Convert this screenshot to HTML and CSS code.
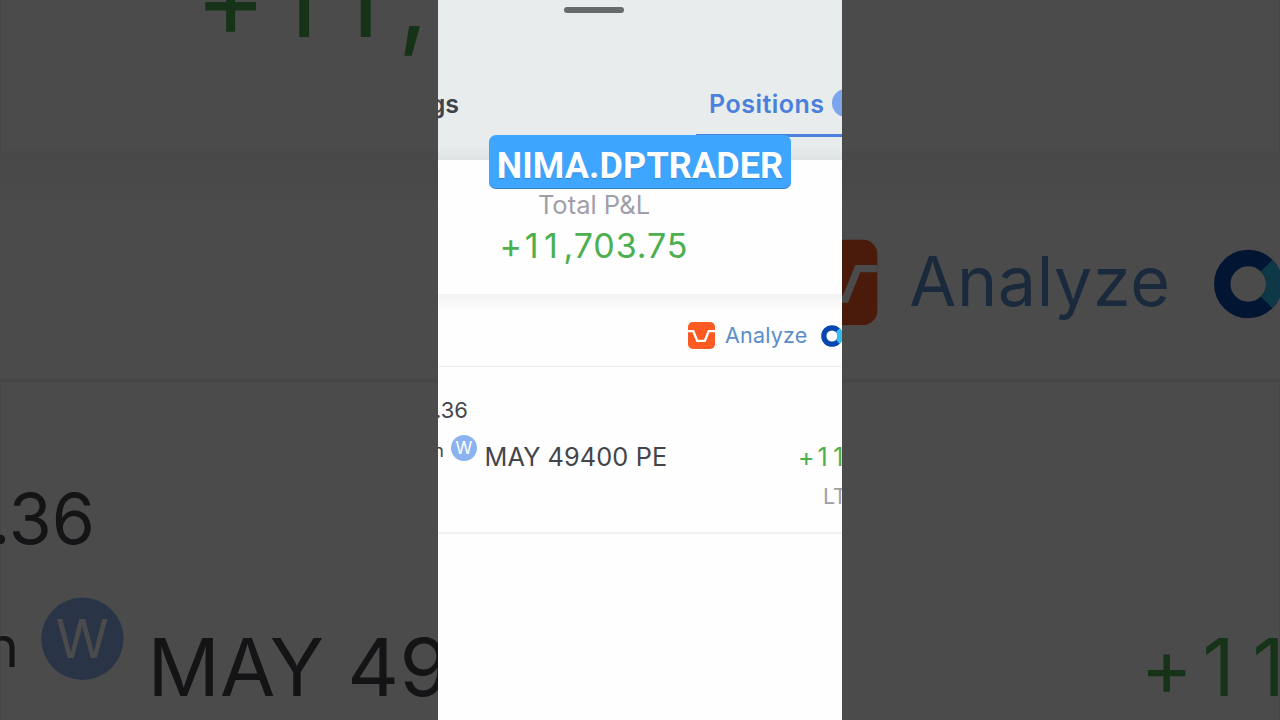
FILE: index.html
```
<!DOCTYPE html>
<html lang="en">
<head>
    <meta charset="UTF-8">
    <title>Positions</title>
    <link rel="stylesheet" href="styles.css">
</head>
<body>

<div class="backdrop" id="backdrop"></div>

<main class="screen" id="screen">
    <header class="header">
        <div class="handle"></div>
        <nav class="tabs">
            <div class="tab holdings">Holdings</div>
            <div class="tab positions">Positions <span class="count">1</span></div>
        </nav>
    </header>

    <section class="summary">
        <div class="summary-label">Total P&amp;L</div>
        <div class="summary-value"><span class="plus">+</span><span class="wide">11</span>,703.75</div>
    </section>

    <section class="tools">
        <svg class="analyze-icon" viewBox="0 0 28 28">
            <rect width="28" height="28" rx="5" fill="#fb5a22"/>
            <path d="M0 9.5H5.5L9.5 19.5H17.5L21.5 9.5H28" fill="none" stroke="#fff" stroke-width="2.4"/>
        </svg>
        <span class="analyze">Analyze</span>
        <svg class="ring-icon" viewBox="0 0 22 22">
            <circle cx="11" cy="11" r="8.2" fill="none" stroke="#0747ad" stroke-width="5.2"/>
            <path d="M16.8 5.2A8.2 8.2 0 0 1 16.8 16.8" fill="none" stroke="#35bdf0" stroke-width="5.2"/>
        </svg>
    </section>

    <section class="position">
        <div class="avg">0.36</div>
        <div class="name-row">
            <span class="suffix">th</span>
            <span class="weekly">W</span>
            <span class="name">MAY 49400 PE</span>
            <span class="pnl"><span class="plus">+</span><span class="wide">11</span>,703.75</span>
        </div>
        <div class="ltp">LTP</div>
    </section>
</main>

<div class="watermark">NIMA.DPTRADER</div>

<script>
    // the backdrop is an enlarged, dimmed copy of the screen
    const copy = document.getElementById('screen').cloneNode(true);
    copy.removeAttribute('id');
    document.getElementById('backdrop').appendChild(copy);
</script>

</body>
</html>
```
FILE: styles.css
```
body {
    margin: 0;
    width: 1280px;
    height: 720px;
    overflow: hidden;
    position: relative;
    display: flex;
    justify-content: center;
    background: #000;
    font-family: Inter, "Liberation Sans", sans-serif;
}

.backdrop {
    position: absolute;
    inset: 0;
    display: flex;
    justify-content: center;
    overflow: hidden;
    opacity: 0.295;
}

.backdrop .screen {
    transform: scale(3.168);
}

.screen {
    position: relative;
    width: 404px;
    height: 720px;
    flex-shrink: 0;
    overflow: hidden;
    background: #fefefe;
    white-space: nowrap;
}

.header {
    height: 160px;
    box-sizing: border-box;
    padding-top: 7px;
    background: linear-gradient(#e8ecec 0, #e8ecec 145px, #dfe2e3 160px);
}

.handle {
    width: 60px;
    height: 6px;
    margin-left: 126px;
    border-radius: 3px;
    background: #676b6b;
}

.tabs {
    display: flex;
    margin-top: 62px;
    height: 62px;
}

.tab {
    box-sizing: border-box;
    line-height: 58px;
    font-size: 25px;
    font-weight: 600;
}

.holdings {
    display: flex;
    justify-content: flex-end;
    width: 21px;
    margin-right: 237px;
    color: #41444b;
}

.positions {
    display: flex;
    align-items: flex-start;
    flex: 1;
    padding-left: 13px;
    border-bottom: 3px solid #4a7fdc;
    color: #4a80dc;
    letter-spacing: 0.5px;
}

.count {
    flex-shrink: 0;
    width: 28px;
    height: 28px;
    margin: 14px 0 0 7px;
    border-radius: 50%;
    background: #7da5ec;
    color: #fff;
    font-size: 16px;
    line-height: 28px;
    text-align: center;
}

.summary {
    height: 134px;
    box-sizing: border-box;
    padding-top: 28px;
    width: 312px;
    text-align: center;
}

.summary-label {
    font-size: 25.5px;
    line-height: 34px;
    color: #a09fa9;
}

.summary-value {
    margin-top: 4px;
    font-size: 34px;
    line-height: 40px;
    letter-spacing: 0.9px;
    color: #4caf50;
}

.summary-value .plus {
    letter-spacing: 2.6px;
}

.summary-value .wide {
    letter-spacing: 5.6px;
}

.tools {
    display: flex;
    align-items: center;
    height: 73px;
    box-sizing: border-box;
    padding: 11px 0 0 250px;
    border-bottom: 1px solid #efefef;
    background: linear-gradient(#f3f3f3 0, #fefefe 18px);
}

.analyze-icon {
    flex-shrink: 0;
    width: 27px;
    height: 27px;
}

.analyze {
    margin: -1px 0 0 10px;
    font-size: 21.5px;
    letter-spacing: 0.2px;
    color: #5a8dca;
}

.ring-icon {
    flex-shrink: 0;
    width: 22px;
    height: 22px;
    margin: 1px 0 0 13px;
}

.position {
    height: 167px;
    box-sizing: border-box;
    padding-top: 28px;
    border-bottom: 2px solid #f1f1f1;
    color: #44454b;
}

.avg {
    display: flex;
    justify-content: flex-end;
    width: 30px;
    font-size: 22px;
    line-height: 30px;
}

.name-row {
    display: flex;
    margin-top: 14px;
    height: 36px;
    line-height: 36px;
}

.suffix {
    display: flex;
    justify-content: flex-end;
    width: 6px;
    font-size: 18px;
    line-height: 24px;
}

.weekly {
    flex-shrink: 0;
    width: 26px;
    height: 26px;
    margin: -4px 0 0 7px;
    border-radius: 50%;
    background: #8db2f0;
    color: #fff;
    font-size: 17px;
    line-height: 26px;
    text-align: center;
}

.name {
    width: 313.5px;
    flex-shrink: 0;
    margin-left: 7.5px;
    font-size: 25.3px;
    letter-spacing: 0.1px;
}

.pnl {
    font-size: 25px;
    color: #4caf50;
}

.pnl .plus {
    letter-spacing: 3px;
}

.pnl .wide {
    letter-spacing: 5.6px;
}

.ltp {
    margin: 6px 0 0 385px;
    font-size: 21.5px;
    line-height: 30px;
    color: #a09fa9;
}

.watermark {
    position: absolute;
    top: 135px;
    left: 489px;
    width: 302px;
    height: 53px;
    border-radius: 7px;
    background: #3fa6ff;
    color: #fff;
    font-family: Roboto, sans-serif;
    font-size: 36px;
    font-weight: 700;
    line-height: 62px;
    letter-spacing: 0.1px;
    text-align: center;
    text-shadow: 0 1px 1px rgba(0, 60, 130, 0.3);
    box-shadow: 0 1px 0 #3181c8;
}
```
